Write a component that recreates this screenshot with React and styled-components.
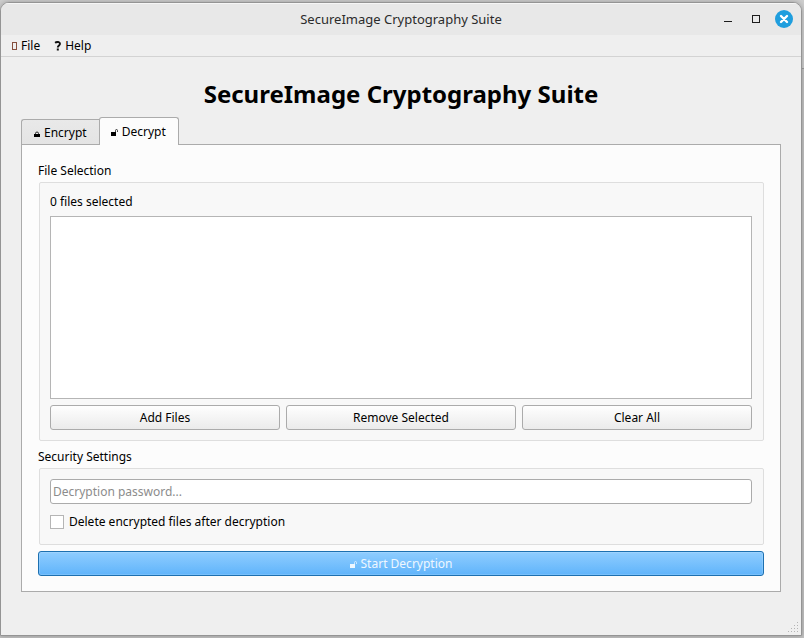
import React, { useState } from "react";
import styled, { createGlobalStyle, css } from "styled-components";

const GlobalStyle = createGlobalStyle`
  *, *::before, *::after { box-sizing: border-box; }
  html, body, #root { height: 100%; }
  body {
    margin: 0;
    background: #c4c4c4;
    color: #000;
    font: 12px/17px "Noto Sans", "Open Sans", sans-serif;
  }
  button, input { font: inherit; color: inherit; }
`;

const Desktop = styled.div`
  display: flex;
  min-height: 100%;
  padding: 2px 2px 2px 0;
  background: linear-gradient(#cdcdcd 68px, #9c9c9c 68px, #9c9c9c 69px, #c2c2c2 69px);
`;

const Window = styled.div`
  position: relative;
  flex: 1;
  display: flex;
  flex-direction: column;
  background: #efefef;
  border: 1px solid #949494;
  border-radius: 9px 9px 0 0;
  box-shadow: 0 0 5px rgba(0, 0, 0, 0.25);
  overflow: hidden;
`;

const TitleBar = styled.header`
  display: grid;
  grid-template-columns: 1fr auto 1fr;
  align-items: center;
  height: 32px;
  padding-bottom: 1px;
  background: #e8e8e8;
  border-top: 1px solid #f6f6f6;
  color: #2b2b2b;
`;

const WindowTitle = styled.span`
  grid-column: 2;
  font-size: 13px;
  line-height: 18px;
`;

const WindowControls = styled.div`
  display: flex;
  justify-content: flex-end;
  gap: 10px;
  padding-right: 8px;
`;

const ControlButton = styled.button`
  display: flex;
  width: 18px;
  height: 18px;
  padding: 0;
  border: 0;
  background: none;
`;

const MenuBar = styled.nav`
  display: flex;
  gap: 14px;
  height: 22px;
  padding: 0 9px;
  border-bottom: 1px solid #d3d3d3;
`;

const MenuButton = styled.button`
  display: flex;
  align-items: center;
  gap: 3px;
  padding: 0;
  border: 0;
  background: none;
`;

const Content = styled.main`
  flex: 1;
  display: flex;
  flex-direction: column;
  padding: 20px 20px 43px;
`;

const Heading = styled.h1`
  margin: 0 0 6px;
  font-size: 24px;
  line-height: 34px;
  font-weight: 700;
  text-align: center;
`;

const TabList = styled.div`
  position: relative;
  display: flex;
  align-items: flex-end;
  margin-bottom: -1px;
`;

const Tab = styled.button`
  display: flex;
  align-items: center;
  justify-content: center;
  gap: 3px;
  height: 26px;
  padding: 0 12px 0 11px;
  border: 1px solid #ababab;
  border-right-width: 0;
  border-radius: 3px 0 0 0;
  background: linear-gradient(#e9e9e9, #e4e4e4);

  ${({ $active }) =>
    $active &&
    css`
      height: 28px;
      border-right-width: 1px;
      border-bottom: 0;
      border-radius: 3px 3px 0 0;
      background: #fcfcfc;
    `}
`;

const Pane = styled.section`
  flex: 1;
  display: flex;
  flex-direction: column;
  padding: 17px 16px 15px;
  border: 1px solid #ababab;
  background: #fcfcfc;
`;

const Group = styled.fieldset`
  display: flex;
  flex-direction: column;
  flex: ${({ $grow }) => ($grow ? 1 : "none")};
  min-width: 0;
  margin: 0 0 ${({ $grow }) => ($grow ? 7 : 6)}px;
  padding: 0;
  border: 0;
`;

const GroupTitle = styled.legend`
  display: contents;
`;

const GroupLabel = styled.span`
  margin-bottom: 2px;
  line-height: 18px;
`;

const GroupBox = styled.div`
  flex: 1;
  display: flex;
  flex-direction: column;
  margin-left: 1px;
  padding: 10px 11px 10px 10px;
  border: 1px solid #dedede;
  border-radius: 2px;
  background: #f8f8f8;
`;

const FileCount = styled.p`
  margin: 0 0 6px;
`;

const FileList = styled.ul`
  flex: 1;
  margin: 0 0 6px;
  padding: 0;
  border: 1px solid #b5b5b5;
  background: #fff;
  list-style: none;
`;

const ButtonRow = styled.div`
  display: grid;
  grid-template-columns: repeat(3, 1fr);
  gap: 6px;
`;

const Button = styled.button`
  display: flex;
  align-items: center;
  justify-content: center;
  gap: 3px;
  height: 25px;
  padding: 0 8px;
  border: 1px solid #ababab;
  border-radius: 3px;
  background: linear-gradient(#fefefe, #ebebeb);

  ${({ $primary }) =>
    $primary &&
    css`
      border-color: #1d70b0;
      background: linear-gradient(#8fcdff, #60b4fb);
      box-shadow: inset 0 0 0 1px rgba(255, 255, 255, 0.15);
      color: #eef7ff;
    `}
`;

const PasswordInput = styled.input`
  width: 100%;
  height: 25px;
  margin-bottom: 9px;
  padding: 0 2px;
  border: 1px solid #ababab;
  border-radius: 3px;
  background: #fff;

  &::placeholder { color: #8c8c8c; opacity: 1; }
`;

const CheckLabel = styled.label`
  display: flex;
  align-items: center;
  gap: 5px;
  margin-bottom: 4px;
`;

const Checkbox = styled.input`
  appearance: none;
  width: 14px;
  height: 14px;
  margin: 0;
  border: 1px solid #b5b5b5;
  background: #fff;

  &:checked { background: #308cc6; }
`;

const SizeGrip = styled.svg`
  position: absolute;
  right: 2px;
  bottom: 2px;
`;

function LockIcon({ open }) {
  return (
    <svg width="8" height="17" viewBox="0 0 8 17" fill="none" aria-hidden="true">
      <rect x={open ? 0 : 1} y={open ? 9 : 10} width={open ? 5 : 6} height={open ? 4 : 3} fill="currentColor" />
      <path
        d={open ? "M4.5 9V7.5a1 1 0 0 1 2 0V9" : "M2.5 10V9.5a1.5 1.5 0 0 1 3 0v.5"}
        stroke="currentColor"
        strokeOpacity={open ? 0.7 : 0.8}
      />
    </svg>
  );
}

function MissingGlyphIcon() {
  return (
    <svg width="8" height="10" viewBox="0 0 8 10" fill="none" aria-hidden="true">
      <rect x="2.5" y="1.5" width="4" height="7" stroke="#854f3d" />
    </svg>
  );
}

function QuestionIcon() {
  return (
    <svg width="8" height="10" viewBox="0 0 8 10" fill="none" aria-hidden="true">
      <path d="M1 1.7C3 .5 6 .6 6 2.8 6 4.5 3.8 4.3 3.8 6.4" stroke="#111" strokeWidth="1.9" />
      <rect x="2.8" y="7.5" width="2" height="2" fill="#111" />
    </svg>
  );
}

export default function App() {
  const [tab, setTab] = useState("decrypt");
  const [password, setPassword] = useState("");

  return (
    <>
      <GlobalStyle />
      <Desktop>
        <Window>
          <TitleBar>
            <WindowTitle>SecureImage Cryptography Suite</WindowTitle>
            <WindowControls>
              <ControlButton aria-label="Minimize">
                <svg width="18" height="18"><path d="M5 11.5h8" stroke="#1c1c1c" /></svg>
              </ControlButton>
              <ControlButton aria-label="Maximize">
                <svg width="18" height="18"><rect x="5.5" y="5.5" width="7" height="7" fill="none" stroke="#1c1c1c" /></svg>
              </ControlButton>
              <ControlButton aria-label="Close">
                <svg width="18" height="18">
                  <circle cx="9" cy="9" r="9" fill="#1f9ede" />
                  <path d="M6 6l6 6M12 6l-6 6" stroke="#fff" strokeWidth="2.4" strokeLinecap="round" />
                </svg>
              </ControlButton>
            </WindowControls>
          </TitleBar>
          <MenuBar>
            <MenuButton><MissingGlyphIcon />File</MenuButton>
            <MenuButton><QuestionIcon />Help</MenuButton>
          </MenuBar>
          <Content>
            <Heading>SecureImage Cryptography Suite</Heading>
            <TabList role="tablist">
              <Tab role="tab" aria-selected={tab === "encrypt"} $active={tab === "encrypt"} onClick={() => setTab("encrypt")}>
                <LockIcon />Encrypt
              </Tab>
              <Tab role="tab" aria-selected={tab === "decrypt"} $active={tab === "decrypt"} onClick={() => setTab("decrypt")}>
                <LockIcon open />Decrypt
              </Tab>
            </TabList>
            <Pane role="tabpanel">
              <Group $grow>
                <GroupTitle><GroupLabel>File Selection</GroupLabel></GroupTitle>
                <GroupBox>
                  <FileCount>0 files selected</FileCount>
                  <FileList aria-label="Selected files" />
                  <ButtonRow>
                    <Button>Add Files</Button>
                    <Button>Remove Selected</Button>
                    <Button>Clear All</Button>
                  </ButtonRow>
                </GroupBox>
              </Group>
              <Group>
                <GroupTitle><GroupLabel>Security Settings</GroupLabel></GroupTitle>
                <GroupBox>
                  <PasswordInput
                    type="password"
                    aria-label="Decryption password"
                    placeholder="Decryption password..."
                    value={password}
                    onChange={(e) => setPassword(e.target.value)}
                  />
                  <CheckLabel>
                    <Checkbox type="checkbox" />
                    Delete encrypted files after decryption
                  </CheckLabel>
                </GroupBox>
              </Group>
              <Button $primary><LockIcon open />Start Decryption</Button>
            </Pane>
          </Content>
          <SizeGrip width="12" height="12" fill="#b4b4b4" aria-hidden="true">
            <path d="M10 1h1v1h-1zM7 4h1v1h-1zM10 4h1v1h-1zM4 7h1v1h-1zM7 7h1v1h-1zM10 7h1v1h-1zM1 10h1v1h-1zM4 10h1v1h-1zM7 10h1v1h-1zM10 10h1v1h-1z" />
          </SizeGrip>
        </Window>
      </Desktop>
    </>
  );
}
